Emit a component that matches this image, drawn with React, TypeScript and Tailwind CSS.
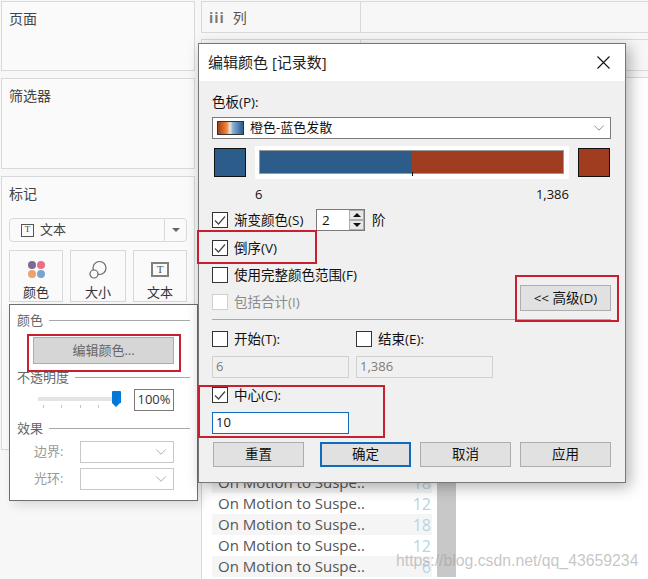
import React from 'react';
import { ChevronDown } from 'lucide-react';

const FONT = 'font-["Open_Sans","Noto_Sans_CJK_SC",sans-serif]';

/* ---------- Small controls ---------- */
const CheckBox: React.FC<{ checked?: boolean; disabled?: boolean }> = ({ checked, disabled }) => (
  <span className={`flex h-4 w-4 shrink-0 items-center justify-center border bg-white ${disabled ? 'border-[#d0d0d0]' : 'border-[#333333]'}`}>
    {checked && (
      <svg width="14" height="14" viewBox="0 0 14 14" fill="none">
        <path d="M2 7.5 L5.5 11 L12 3.5" stroke="#444444" strokeWidth="1.2" />
      </svg>
    )}
  </span>
);

const CheckRow: React.FC<{ label: string; checked?: boolean; disabled?: boolean; className?: string }> = ({ label, checked, disabled, className = '' }) => (
  <div className={`flex h-[18px] items-center gap-[6px] ${className}`}>
    <CheckBox checked={checked} disabled={disabled} />
    <span className={disabled ? 'text-[#8a8a8a]' : 'text-[#111111]'}>{label}</span>
  </div>
);

const DialogButton: React.FC<{ label: string; primary?: boolean; className?: string }> = ({ label, primary, className = '' }) => (
  <div className={`flex h-[25px] w-[91px] items-center justify-center bg-[#e1e1e1] text-[#111111] ${primary ? 'border-2 border-[#0f6cbd]' : 'border border-[#adadad]'} ${className}`}>
    {label}
  </div>
);

const Panel: React.FC<{ title: string; className: string; children?: React.ReactNode }> = ({ title, className, children }) => (
  <div className={`border border-[#d9d9d9] bg-[#fafafa] px-[7px] ${className}`}>
    <div className="pt-[7px] text-[14px] leading-5 text-[#444444]">{title}</div>
    {children}
  </div>
);

const MarkCard: React.FC<{ label: string; className: string; children: React.ReactNode }> = ({ label, className, children }) => (
  <div className={`flex h-[52px] flex-col items-center border border-[#d9d9d9] pt-2 ${className}`}>
    <div className="flex h-[22px] items-center">{children}</div>
    <div className="mt-[3px] text-[13px] leading-[18px] text-[#333333]">{label}</div>
  </div>
);

const SectionTitle: React.FC<{ title: string; className?: string }> = ({ title, className = '' }) => (
  <div className={`flex items-center gap-[6px] text-[13px] leading-[18px] text-[#666666] ${className}`}>
    <span>{title}</span>
    <span className="h-px flex-1 bg-[#a8a8a8]" />
  </div>
);

const GhostSelect: React.FC<{ label: string; className?: string }> = ({ label, className = '' }) => (
  <div className={`flex items-center ${className}`}>
    <span className="ml-[17px] w-[46px] text-[13px] text-[#9a9a9a]">{label}</span>
    <div className="flex h-[22px] w-[94px] items-center justify-end border border-[#c8c8c8] bg-white pr-[3px]">
      <ChevronDown size={18} strokeWidth={0.8} className="text-[#777777]" />
    </div>
  </div>
);

const rows = ['18', '12', '18', '12', '6'];
const ticks = [5, 23, 42, 60];

/* ---------- Page ---------- */
export default function App() {
  return (
    <div className={`relative h-[579px] w-[648px] overflow-hidden bg-[#f7f7f7] ${FONT}`}>
      <div className="flex h-full pl-px pt-px">
        {/* Left cards */}
        <div className="flex w-[194px] flex-col gap-[7px]">
          <Panel title="页面" className="h-[70px]" />
          <Panel title="筛选器" className="h-[91px]" />
          <Panel title="标记" className="h-[274px]">
            <div className="mt-[14px] flex h-6 items-center rounded-sm border border-[#d9d9d9] pl-[11px]">
              <span className="flex h-[13px] w-[13px] items-center justify-center border border-[#555555] font-['Liberation_Serif',serif] text-[9px] text-[#444444]">T</span>
              <span className="ml-[6px] flex-1 text-[13px] text-[#444444]">文本</span>
              <span className="flex h-full w-[22px] items-center justify-center border-l border-[#d9d9d9]">
                <span className="h-0 w-0 border-x-[4px] border-t-[4px] border-x-transparent border-t-[#666666]" />
              </span>
            </div>
            <div className="mt-2 flex">
              <MarkCard label="颜色" className="w-[54px]">
                <span className="grid grid-cols-2 gap-px">
                  <span className="h-[8px] w-[8px] rounded-full bg-[#7b6a96]" />
                  <span className="h-[8px] w-[8px] rounded-full bg-[#ea6f85]" />
                  <span className="h-[8px] w-[8px] rounded-full bg-[#eba26f]" />
                  <span className="h-[8px] w-[8px] rounded-full bg-[#78a5cf]" />
                </span>
              </MarkCard>
              <MarkCard label="大小" className="ml-[7px] w-[56px]">
                <svg width="20" height="20" viewBox="0 0 20 20" fill="none" stroke="#666666" strokeWidth="1.2">
                  <circle cx="11.5" cy="8" r="6.5" />
                  <circle cx="6" cy="14" r="4" fill="#fafafa" />
                </svg>
              </MarkCard>
              <MarkCard label="文本" className="ml-[7px] w-[54px]">
                <span className="flex h-[15px] w-[18px] items-center justify-center border-2 border-[#808080] font-['Liberation_Serif',serif] text-[11px] text-[#555555]">T</span>
              </MarkCard>
            </div>
          </Panel>
        </div>

        {/* Right side: shelves and the view */}
        <div className="ml-[6px] flex flex-1 flex-col">
          <div className="flex h-8 border-y border-l border-[#d9d9d9]">
            <div className="flex w-[159px] items-center border-r border-[#d9d9d9] pl-[7px] text-[14px] text-[#555555]">
              <span className="mr-[8px] font-bold tracking-[1px] text-[#777777]">iii</span>列
            </div>
          </div>
          <div className="mt-[6px] h-8 border-y border-l border-[#d9d9d9]">
            <div className="h-full w-[159px] border-r border-[#d9d9d9]" />
          </div>
          <div className="mt-[6px] flex flex-1 flex-col justify-end border-l border-t border-[#d9d9d9] bg-white pb-[2px] pl-[10px]">
            {rows.map((n, i) => (
              <div key={i} className="flex items-end">
                <div className={`flex h-[21px] w-[220px] items-center justify-between pl-[6px] pr-px ${i % 2 === 0 ? 'bg-[#f5f5f5]' : 'bg-white'}`}>
                  <span className="text-[15px] leading-none text-[#555555]">On Motion to Suspe..</span>
                  <span className="text-[16px] leading-none text-[#b5d5e8]">{n}</span>
                </div>
                <div className="ml-[5px] h-[21px] w-[19px] bg-[#c8c8c8]" />
              </div>
            ))}
          </div>
        </div>
      </div>

      {/* Mark colour popover */}
      <div className="absolute left-[9px] top-[304px] h-[197px] w-[189px] border border-[#6e6e6e] bg-white pl-[7px] pr-[7px] pt-[6px] shadow-[4px_4px_10px_rgba(0,0,0,0.12)]">
        <SectionTitle title="颜色" />
        <div className="ml-4 mt-[8px] flex h-[27px] w-[141px] items-center justify-center border border-[#adadad] bg-[#d6d6d6] text-[13px] text-[#666666]">
          编辑颜色...
        </div>
        <SectionTitle title="不透明度" className="mt-[4px]" />
        <div className="mt-[3px] flex items-center">
          <div className="relative ml-[21px] h-[22px] w-[84px]">
            <div className="absolute left-0 top-[8px] h-[4px] w-[78px] bg-[#e4e4e4]" />
            {ticks.map(x => (
              <div key={x} className="absolute top-[16px] h-[3px] w-px bg-[#c4c4c4]" style={{ left: x }} />
            ))}
            <div className="absolute left-[74px] top-[2px] h-[12px] w-[9px] rounded-t-[1px] bg-[#0078d7]" />
            <div className="absolute left-[74px] top-[14px] h-0 w-0 border-x-[4.5px] border-t-[4px] border-x-transparent border-t-[#0078d7]" />
          </div>
          <div className="ml-[12px] flex h-[22px] w-[40px] items-center justify-center border border-[#7a7a7a] text-[13px] text-[#333333]">100%</div>
        </div>
        <SectionTitle title="效果" className="mt-[8px]" />
        <GhostSelect label="边界:" className="mt-[4px]" />
        <GhostSelect label="光环:" className="mt-[5px]" />
      </div>
      <div className="absolute left-[27px] top-[334px] h-[38px] w-[154px] border-2 border-[#c8202f]" />

      {/* Edit colours dialog */}
      <div className="absolute left-[198px] top-[43px] h-[440px] w-[428px] border border-[#777777] bg-[#f0f0f0] text-[13.5px] shadow-[4px_4px_14px_rgba(0,0,0,0.3)]">
        <div className="flex h-[37px] items-center justify-between bg-white pl-[9px] pr-[15px]">
          <span className="text-[15px] text-[#222222]">编辑颜色 [记录数]</span>
          <svg width="13" height="13" viewBox="0 0 13 13" stroke="#111111" strokeWidth="1.1">
            <path d="M0.5 0.5 L12.5 12.5 M12.5 0.5 L0.5 12.5" />
          </svg>
        </div>
        <div className="pl-[13px] pr-[14px] pt-[12px]">
          <div className="h-[18px] leading-[18px] text-[#111111]">色板(P):</div>
          <div className="mt-[6px] flex h-[22px] items-center border border-[#7a7a7a] bg-white pl-[4px] pr-[2px]">
            <span className="h-[14px] w-[27px] border border-[#333333] bg-[linear-gradient(90deg,#a83c14,#ee8a3c_35%,#efe4d8_48%,#7fb0d8_60%,#2b5c8a)]" />
            <span className="ml-[6px] flex-1 text-[13px] text-[#111111]">橙色-蓝色发散</span>
            <ChevronDown size={18} strokeWidth={0.8} className="text-[#444444]" />
          </div>
          <div className="mt-[7px] flex h-[33px] items-center">
            <span className="ml-[2px] h-[29px] w-[32px] border border-[#111111] bg-[#2b5c8a]" />
            <div className="relative ml-[9px] flex h-[33px] w-[314px] bg-white p-[4px]">
              <div className="flex h-[24px] w-[305px] border border-[#9a9a9a]">
                <div className="w-[152px] bg-[#2b5c8a]" />
                <div className="flex-1 bg-[#a03c20]" />
              </div>
              <span className="absolute left-[157px] top-[26px] h-[4px] w-px bg-[#111111]" />
            </div>
            <span className="ml-[9px] h-[29px] w-[32px] border border-[#111111] bg-[#a03c20]" />
          </div>
          <div className="mt-[7px] flex h-4 w-[357px] items-center justify-between pl-[43px] text-[13px] leading-4 text-[#111111]">
            <span>6</span>
            <span>1,386</span>
          </div>
          <div className="mt-[7px] flex h-[22px] items-center">
            <CheckRow label="渐变颜色(S)" checked className="w-[104px]" />
            <div className="flex h-[22px] w-[49px] border border-[#7a7a7a] bg-white pl-[5px] leading-5 text-[#111111]">
              <span className="flex-1">2</span>
              <div className="flex w-[15px] flex-col">
                <span className="flex flex-1 items-center justify-center border border-[#adadad] bg-[#e8e8e8]">
                  <span className="h-0 w-0 border-x-[4px] border-b-[4px] border-x-transparent border-b-[#111111]" />
                </span>
                <span className="flex flex-1 items-center justify-center border border-[#adadad] bg-[#e8e8e8]">
                  <span className="h-0 w-0 border-x-[4px] border-t-[4px] border-x-transparent border-t-[#111111]" />
                </span>
              </div>
            </div>
            <span className="ml-[7px] text-[#111111]">阶</span>
          </div>
          <CheckRow label="倒序(V)" checked className="mt-[8px]" />
          <div className="mt-[9px] flex items-end justify-between">
            <div>
              <CheckRow label="使用完整颜色范围(F)" />
              <CheckRow label="包括合计(I)" disabled className="mt-[9px]" />
            </div>
            <div className="flex h-[26px] w-[91px] items-center justify-center border border-[#adadad] bg-[#e1e1e1] text-[#111111]">&lt;&lt; 高级(D)</div>
          </div>
          <div className="mt-[8px] h-px bg-[#a8a8a8]" />
          <div className="mt-[10px] flex">
            <CheckRow label="开始(T):" className="w-[144px]" />
            <CheckRow label="结束(E):" />
          </div>
          <div className="mt-[8px] flex text-[13px]">
            <div className="flex h-[22px] w-[137px] items-center border border-[#d0d0d0] pl-[3px] text-[#7d7d7d]">6</div>
            <div className="ml-[7px] flex h-[22px] w-[137px] items-center border border-[#d0d0d0] pl-[3px] text-[#7d7d7d]">1,386</div>
          </div>
          <CheckRow label="中心(C):" checked className="mt-[8px]" />
          <div className="mt-[8px] flex h-[22px] w-[137px] items-center border border-[#0f6cbd] bg-white pl-[3px] text-[13px] text-[#111111]">10</div>
          <div className="mt-[8px] flex pl-px">
            <DialogButton label="重置" />
            <DialogButton label="确定" primary className="ml-[16px]" />
            <DialogButton label="取消" className="ml-[9px]" />
            <DialogButton label="应用" className="ml-[9px]" />
          </div>
        </div>
      </div>

      {/* Red annotation boxes */}
      <div className="absolute left-[197px] top-[230px] h-[34px] w-[120px] border-2 border-[#c8202f]" />
      <div className="absolute left-[515px] top-[275px] h-[47px] w-[104px] border-2 border-[#c8202f]" />
      <div className="absolute left-[198px] top-[385px] h-[53px] w-[187px] border-2 border-[#c8202f]" />

      {/* Watermark */}
      <div className="absolute left-[396px] top-[550px] font-['Liberation_Sans',sans-serif] text-[15.8px] leading-[22px] text-[#a0a0a0]/60">
        https://blog.csdn.net/qq_43659234
      </div>
    </div>
  );
}
